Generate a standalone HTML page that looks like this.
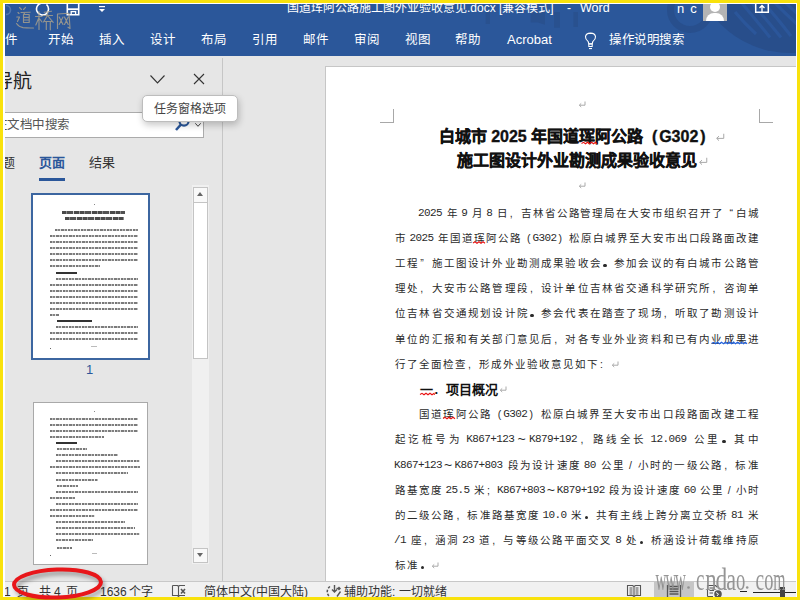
<!DOCTYPE html>
<html lang="zh-CN">
<head>
<meta charset="utf-8">
<style>
*{box-sizing:border-box;margin:0;padding:0}
html,body{width:800px;height:600px;overflow:hidden;background:#F9E20C;font-family:"Liberation Sans",sans-serif}
.a{position:absolute}
.L{position:absolute;left:0;top:0;width:800px;height:600px}
#frame{left:3px;top:3px;width:794px;height:594px;background:#fff}
#topL{clip-path:inset(4px 4px 544px 5px);background:#2B579A}
#mainL{clip-path:inset(56px 4px 19px 5px);background:#E6E6E6}
#statL{clip-path:inset(581px 4px 3px 5px);background:#F1F1F1}
.tab{position:absolute;top:32px;color:#fff;font-size:12.5px;line-height:16px;white-space:nowrap}
.ttl{position:absolute;top:0px;color:#fff;font-size:12px;line-height:16px;white-space:nowrap}
.body{position:absolute;left:394px;width:365px;font-family:"Liberation Serif",serif;font-size:11.5px;color:#222;font-weight:300;white-space:nowrap;line-height:25.2px}
.ln{display:block;height:25.2px;text-align:justify;text-align-last:justify}
.ret{color:#9a9a9a;font-family:"Liberation Sans",sans-serif;font-size:10px}
.bl{position:absolute;height:25.2px;line-height:25.2px;display:flex;justify-content:space-between;white-space:nowrap;font-family:"Liberation Sans",sans-serif;font-size:10.5px;color:#2a2a2a;font-weight:300}
.bl i{font-style:normal;display:block;width:12px;text-align:center}
.bl i.sp{width:3.6px}
.bl i.lt{font-family:"Liberation Mono",monospace;font-size:11px;letter-spacing:-0.6px;font-weight:normal;width:auto}
.bll{justify-content:flex-start}
.hd{font-family:"Liberation Sans",sans-serif;font-weight:bold;font-size:13px;color:#111}
.tb{height:2px;opacity:.8;background:repeating-linear-gradient(90deg,#555 0 2px,#aaa 2px 3px,#666 3px 5px,#ddd 5px 6px,#5a5a5a 6px 9px,#b0b0b0 9px 10px,#606060 10px 12px,#eee 12px 13px)}
.tt{height:2.5px;opacity:.85;background:repeating-linear-gradient(90deg,#2a2a2a 0 4px,#777 4px 5px,#333 5px 11px,#ccc 11px 12px,#2a2a2a 12px 17px,#888 17px 18px)}
.c{display:inline-block;width:1em;text-align:center;text-indent:0;font-style:normal}
.pl{text-align:left;padding-left:.12em}.pr{text-align:right;padding-right:.12em}.pc{text-align:center}
.dt{display:inline-block;width:.3em;height:.3em;background:currentColor;border-radius:50%;vertical-align:baseline;margin-left:.05em}
.rt{display:inline-block;vertical-align:baseline;margin-left:1px}
.st{position:absolute;top:585px;font-size:12px;line-height:14px;color:#333;white-space:nowrap}
</style>
</head>
<body>
<div id="frame" class="a"></div>

<!-- ================= title bar + ribbon tabs ================= -->
<div id="topL" class="L">
  <!-- decorative pattern -->
  <svg class="a" style="left:0;top:0" width="800" height="60" viewBox="0 0 800 60">
    <circle cx="690" cy="10" r="19.5" fill="none" stroke="#284F8D" stroke-width="7"/>
    <clipPath id="bigc"><circle cx="790" cy="-45" r="98"/></clipPath>
    <circle cx="790" cy="-45" r="98" fill="#284E8B"/>
    <g clip-path="url(#bigc)" stroke="#2B569A" stroke-width="3.2" fill="none">
      <path d="M735 12 Q745 24 756 34"/>
      <path d="M741 2 Q756 20 770 37.5"/>
      <path d="M751 2 Q767 20 781 37.5"/>
      <path d="M763 2 Q778 19 791 36"/>
      <path d="M774 2 Q788 16 800 27"/>
      <path d="M785 2 Q793 10 800 16"/>
    </g>
    <g fill="#29518F">
      <rect x="485.7" y="12" width="4.3" height="12"/><path d="M530.7 12H545V24.7L538 22.5H530.7Z"/>
      <rect x="554" y="12" width="6" height="15.7"/><rect x="573.4" y="12" width="4.6" height="15"/>
    </g>
  </svg>
  <!-- quick access -->
  <svg class="a" style="left:0;top:0" width="120" height="20" viewBox="0 0 120 20">
    <path d="M6 5.5 A4.5 4.5 0 0 1 6 14.5" fill="none" stroke="#5276AE" stroke-width="1.6"/>
    <path d="M46.5 4.5 A6 6 0 1 1 41 3.2" fill="none" stroke="#fff" stroke-width="1.6"/>
    <path d="M67.3 2 V14.7 H78.7 V2" fill="none" stroke="#fff" stroke-width="1.6"/>
    <rect x="67.3" y="8.3" width="11.4" height="1.8" fill="#fff"/>
    <path d="M71.2 14.7 V11.6 H75.6 V14.7" fill="none" stroke="#fff" stroke-width="1.3"/>
    <rect x="99" y="6" width="6" height="1.2" fill="#fff"/>
    <path d="M99 9 H105 L102 12 Z" fill="#fff"/>
  </svg>
  <!-- title -->
  <div class="ttl" style="left:287px"><span class="c">国</span><span class="c">道</span><span class="c">珲</span><span class="c">阿</span><span class="c">公</span><span class="c">路</span><span class="c">施</span><span class="c">工</span><span class="c">图</span><span class="c">外</span><span class="c">业</span><span class="c">验</span><span class="c">收</span><span class="c">意</span><span class="c">见</span>.docx [<span class="c">兼</span><span class="c">容</span><span class="c">模</span><span class="c">式</span>]</div>
  <div class="ttl" style="left:567px">-</div>
  <div class="ttl" style="left:580px;font-size:12.5px">Word</div>
  <div class="ttl" style="left:677px;top:1px;font-size:13px;letter-spacing:1.2px">n c</div>
  <div class="a" style="left:703px;top:3px;width:24px;height:18px;background:#B4B4B4;overflow:hidden">
    <div class="a" style="left:7px;top:-1px;width:10px;height:10px;border-radius:50%;background:#fff"></div>
    <div class="a" style="left:3px;top:10px;width:18px;height:12px;border-radius:8px 8px 0 0;background:#fff"></div>
  </div>
  <svg class="a" style="left:754px;top:2px" width="16" height="12" viewBox="0 0 16 12"><path d="M1.7 0 V10.3 H14.3 V0" fill="none" stroke="#fff" stroke-width="1.5"/><path d="M8 10 V3.5 M5.5 6 L8 3.5 L10.5 6" fill="none" stroke="#fff" stroke-width="1.3"/></svg>
  <!-- tabs -->
  <div class="tab" style="left:5px"><span class="c">件</span></div>
  <div class="tab" style="left:48px"><span class="c">开</span><span class="c">始</span></div>
  <div class="tab" style="left:99px"><span class="c">插</span><span class="c">入</span></div>
  <div class="tab" style="left:150px"><span class="c">设</span><span class="c">计</span></div>
  <div class="tab" style="left:201px"><span class="c">布</span><span class="c">局</span></div>
  <div class="tab" style="left:252px"><span class="c">引</span><span class="c">用</span></div>
  <div class="tab" style="left:303px"><span class="c">邮</span><span class="c">件</span></div>
  <div class="tab" style="left:354px"><span class="c">审</span><span class="c">阅</span></div>
  <div class="tab" style="left:405px"><span class="c">视</span><span class="c">图</span></div>
  <div class="tab" style="left:455px"><span class="c">帮</span><span class="c">助</span></div>
  <div class="tab" style="left:507px;font-size:13px">Acrobat</div>
  <svg class="a" style="left:582px;top:30px" width="16" height="20" viewBox="0 0 16 20"><path d="M6.8 13.9 L6.2 11.6 Q3.2 9.2 3.5 6.6 Q4 3.2 8.5 3.1 Q13 3.2 13.5 6.6 Q13.8 9.2 10.8 11.6 L10.2 13.9 Z" fill="none" stroke="#fff" stroke-width="1.1"/><rect x="6.8" y="13.9" width="3.4" height="2.6" fill="none" stroke="#fff" stroke-width="1"/><rect x="7" y="18" width="3" height="1.1" fill="#fff"/></svg>
  <div class="tab" style="left:609px"><span class="c">操</span><span class="c">作</span><span class="c">说</span><span class="c">明</span><span class="c">搜</span><span class="c">索</span></div>
  <!-- watermark -->
  <svg class="a" style="left:0;top:0" width="90" height="40" viewBox="0 0 90 40"><g fill="none" stroke="#A59E8C" stroke-width="1.15" stroke-linecap="round" stroke-linejoin="round" opacity=".85">
    <path d="M19.5 7.5L21.5 9.5M25.5 7.3L23.5 9.5M21 12.5L30 12.2M24.5 13L23.8 14.5M23.5 14.5V22.5M23.5 14.5H29.2V22.5M23.8 17.3H29M23.8 20H29M23.8 22.5H29.2"/>
    <path d="M18 12.5L19 13.5M16.8 17H19.5L17.5 21.5M16.5 23.5Q19 27 23 27.6Q28 28.2 33.5 28"/>
    <path d="M35.5 16.5H42M39 11.5V29.5M39 17.5L35.8 25M39.8 19L42 22M44.3 12.3L51.5 11.2M43.2 15.5H52.5M47.8 11.8L47.5 15.5L43.5 22M47.5 15.5L53.2 22.3M45 21.5H51.5M46.3 21.5V29.5M50.3 21.5V29.8"/>
    <path d="M57.5 14V28.5M57.5 14L69 13.3L70 28.5L68 27.2M59.2 17L63 24.5M63 17L59.2 24.5M64.5 17L68.2 24.5M68.2 17L64.5 24.5"/>
  </g></svg>
</div>

<!-- ================= main gray area ================= -->
<div id="mainL" class="L">
  <!-- nav pane -->
  <div class="a" style="left:-6px;top:69px;font-size:19px;line-height:26px;color:#222;white-space:nowrap"><span class="c">导</span><span class="c">航</span></div>
  <svg class="a" style="left:150px;top:75px" width="15" height="9" viewBox="0 0 15 9"><path d="M0.5 0.5L7.5 8L14.5 0.5" fill="none" stroke="#333" stroke-width="1.1"/></svg>
  <svg class="a" style="left:193px;top:73px" width="12" height="12" viewBox="0 0 12 12"><path d="M1 1L11 11M11 1L1 11" fill="none" stroke="#333" stroke-width="1.1"/></svg>
  <!-- search box -->
  <div class="a" style="left:-2px;top:112px;width:206px;height:26px;background:#fff;border:1px solid #ABABAB"></div>
  <div class="a" style="left:-5.5px;top:116.5px;font-size:12.5px;line-height:16px;color:#555;white-space:nowrap"><span class="c">在</span><span class="c">文</span><span class="c">档</span><span class="c">中</span><span class="c">搜</span><span class="c">索</span></div>
  <svg class="a" style="left:174px;top:114px" width="16" height="18" viewBox="0 0 16 18"><circle cx="10" cy="7" r="4.6" fill="none" stroke="#2B579A" stroke-width="2.2"/><path d="M7 10.5L2 16" stroke="#2B579A" stroke-width="2.6"/></svg>
  <svg class="a" style="left:195px;top:123px" width="6" height="4" viewBox="0 0 6 4"><path d="M0.3 0.3L3 3.3L5.7 0.3" fill="none" stroke="#444" stroke-width="1"/></svg>
  <!-- tabs -->
  <div class="a" style="left:-11px;top:155px;font-size:13px;line-height:16px;color:#333;white-space:nowrap"><span class="c">标</span><span class="c">题</span></div>
  <div class="a" style="left:39px;top:155px;font-size:13px;line-height:16px;color:#2B579A;font-weight:bold;white-space:nowrap"><span class="c">页</span><span class="c">面</span></div>
  <div class="a" style="left:89px;top:155px;font-size:13px;line-height:16px;color:#333;white-space:nowrap"><span class="c">结</span><span class="c">果</span></div>
  <div class="a" style="left:39px;top:178px;width:26px;height:3px;background:#2B579A"></div>
  <!-- thumbnail 1 -->
  <div class="a" style="left:31px;top:193px;width:119px;height:167px;background:#fff;border:2.5px solid #3C66A0"></div>
  <div class="a" style="left:86px;top:363px;font-size:13px;line-height:14px;color:#2B579A">1</div>
  <!-- thumbnail 2 -->
  <div class="a" style="left:33px;top:402px;width:115px;height:163px;background:#fff;border:1px solid #A9A9A9"></div>
  <div class="a tt" style="left:62px;top:211.0px;width:63px"></div>
  <div class="a tt" style="left:65px;top:217.0px;width:59px"></div>
  <div class="a tb" style="left:55px;top:229.2px;width:83px"></div>
  <div class="a tb" style="left:50px;top:234.9px;width:88px"></div>
  <div class="a tb" style="left:50px;top:240.8px;width:88px"></div>
  <div class="a tb" style="left:50px;top:246.7px;width:88px"></div>
  <div class="a tb" style="left:50px;top:252.7px;width:88px"></div>
  <div class="a tb" style="left:50px;top:258.7px;width:88px"></div>
  <div class="a tb" style="left:50px;top:264.7px;width:50px"></div>
  <div class="a" style="left:56px;top:271.7px;width:21px;height:2px;background:#333"></div>
  <div class="a tb" style="left:56px;top:277.8px;width:82px"></div>
  <div class="a tb" style="left:50px;top:283.8px;width:88px"></div>
  <div class="a tb" style="left:50px;top:289.8px;width:88px"></div>
  <div class="a tb" style="left:50px;top:295.7px;width:88px"></div>
  <div class="a tb" style="left:50px;top:301.8px;width:88px"></div>
  <div class="a tb" style="left:50px;top:307.7px;width:88px"></div>
  <div class="a tb" style="left:50px;top:313.6px;width:9px"></div>
  <div class="a" style="left:57px;top:319.8px;width:35px;height:2px;background:#333"></div>
  <div class="a tb" style="left:56px;top:325.6px;width:82px"></div>
  <div class="a tb" style="left:50px;top:331.6px;width:88px"></div>
  <div class="a tb" style="left:50px;top:337.7px;width:88px"></div>
  <div class="a" style="left:91px;top:346.0px;width:6px;height:1px;background:#bbb"></div>
  <div class="a tb" style="left:50px;top:418.0px;width:88px"></div>
  <div class="a tb" style="left:50px;top:424.0px;width:88px"></div>
  <div class="a tb" style="left:50px;top:430.0px;width:88px"></div>
  <div class="a tb" style="left:50px;top:436.0px;width:54px"></div>
  <div class="a" style="left:56px;top:442.0px;width:21px;height:2px;background:#333"></div>
  <div class="a tb" style="left:57px;top:448.0px;width:30px"></div>
  <div class="a tb" style="left:56px;top:454.0px;width:62px"></div>
  <div class="a tb" style="left:56px;top:460.0px;width:84px"></div>
  <div class="a tb" style="left:50px;top:466.0px;width:90px"></div>
  <div class="a tb" style="left:56px;top:472.0px;width:72px"></div>
  <div class="a tb" style="left:56px;top:478.7px;width:42px"></div>
  <div class="a tb" style="left:57px;top:484.8px;width:21px"></div>
  <div class="a tb" style="left:56px;top:491.0px;width:82px"></div>
  <div class="a tb" style="left:50px;top:497.0px;width:25px"></div>
  <div class="a tb" style="left:56px;top:503.0px;width:82px"></div>
  <div class="a tb" style="left:50px;top:509.0px;width:88px"></div>
  <div class="a tb" style="left:50px;top:515.0px;width:45px"></div>
  <div class="a tb" style="left:56px;top:521.0px;width:69px"></div>
  <div class="a tb" style="left:56px;top:527.0px;width:79px"></div>
  <div class="a tb" style="left:56px;top:533.0px;width:84px"></div>
  <div class="a tb" style="left:56px;top:539.0px;width:37px"></div>
  <div class="a tb" style="left:57px;top:546.5px;width:15px"></div>
  <div class="a" style="left:92px;top:553.0px;width:5px;height:1px;background:#bbb"></div>
  <div class="a" style="left:94px;top:204px;width:1px;height:1px;background:#888"></div>
  <div class="a" style="left:94px;top:411px;width:1px;height:1px;background:#888"></div>
  <div class="a" style="left:50px;top:348px;width:1px;height:1px;background:#666"></div>
  <div class="a" style="left:50px;top:555px;width:1px;height:1px;background:#666"></div>
  <!-- scrollbar -->
  <div class="a" style="left:192px;top:185px;width:17px;height:379px;background:#F0F0F0"></div>
  <div class="a" style="left:193px;top:187px;width:15px;height:16px;background:#F9F9F9;border:1px solid #C4C4C4"></div>
  <div class="a" style="left:197px;top:192px;width:0;height:0;border-left:3.7px solid transparent;border-right:3.7px solid transparent;border-bottom:4.5px solid #666"></div>
  <div class="a" style="left:193px;top:202px;width:15px;height:157px;background:#fff;border:1px solid #C4C4C4"></div>
  <div class="a" style="left:193px;top:548px;width:15px;height:15px;background:#F9F9F9;border:1px solid #C4C4C4"></div>
  <div class="a" style="left:197px;top:553px;width:0;height:0;border-left:3.7px solid transparent;border-right:3.7px solid transparent;border-top:4.5px solid #666"></div>
  <!-- separator -->
  <div class="a" style="left:222px;top:58px;width:1px;height:523px;background:#C6C6C6"></div>
  <!-- tooltip -->
  <div class="a" style="left:142px;top:95px;width:96px;height:27px;background:#fff;border:1px solid #BDBDBD;border-radius:5px;box-shadow:1px 3px 7px rgba(0,0,0,.22)"></div>
  <div class="a" style="left:154px;top:101px;font-size:12px;line-height:16px;color:#444;white-space:nowrap"><span class="c">任</span><span class="c">务</span><span class="c">窗</span><span class="c">格</span><span class="c">选</span><span class="c">项</span></div>

  <!-- page -->
  <div class="a" style="left:325px;top:66px;width:480px;height:540px;background:#fff;border-left:1px solid #C6C6C6;border-top:1px solid #C6C6C6"></div>
  <div class="a" style="left:380px;top:122px;width:14px;height:1px;background:#A8A8A8"></div>
  <div class="a" style="left:393px;top:109px;width:1px;height:14px;background:#A8A8A8"></div>
  <div class="a" style="left:759px;top:122px;width:14px;height:1px;background:#A8A8A8"></div>
  <div class="a" style="left:759px;top:109px;width:1px;height:14px;background:#A8A8A8"></div>

  <!-- document text -->
  <div class="ret a" style="left:577px;top:98.5px"><svg class="rt" width="8" height="7" viewBox="0 0 8 7"><path d="M7 0.5V4.2H1.5M3.2 2.4L1.3 4.2L3.2 6" fill="none" stroke="#A0A0A0" stroke-width="0.9"/></svg></div>
  <div class="a" style="left:394px;top:125px;width:365px;text-align:center;font-size:16px;line-height:24px;font-weight:bold;color:#111;white-space:nowrap;-webkit-text-stroke:0.35px #111"><span class="c">白</span><span class="c">城</span><span class="c">市</span> 2025 <span class="c">年</span><span class="c">国</span><span class="c">道</span><span class="c">珲</span><span class="c">阿</span><span class="c">公</span><span class="c">路</span><span class="c pr">(</span>G302<span class="c pl">)</span><span style="position:absolute;-webkit-text-stroke:0"><svg class="rt" width="10" height="9" viewBox="0 0 8 7" style="margin-left:1px"><path d="M7 0.5V4.2H1.5M3.2 2.4L1.3 4.2L3.2 6" fill="none" stroke="#A8A8A8" stroke-width="0.8"/></svg></span></div>
  <div class="a" style="left:394px;top:149px;width:365px;text-align:center;font-size:16px;line-height:24px;font-weight:bold;color:#111;white-space:nowrap;-webkit-text-stroke:0.35px #111"><span class="c">施</span><span class="c">工</span><span class="c">图</span><span class="c">设</span><span class="c">计</span><span class="c">外</span><span class="c">业</span><span class="c">勘</span><span class="c">测</span><span class="c">成</span><span class="c">果</span><span class="c">验</span><span class="c">收</span><span class="c">意</span><span class="c">见</span><span style="position:absolute;-webkit-text-stroke:0"><svg class="rt" width="10" height="9" viewBox="0 0 8 7" style="margin-left:1px"><path d="M7 0.5V4.2H1.5M3.2 2.4L1.3 4.2L3.2 6" fill="none" stroke="#A8A8A8" stroke-width="0.8"/></svg></span></div>
  <div class="ret a" style="left:577px;top:180px"><svg class="rt" width="8" height="7" viewBox="0 0 8 7"><path d="M7 0.5V4.2H1.5M3.2 2.4L1.3 4.2L3.2 6" fill="none" stroke="#A0A0A0" stroke-width="0.9"/></svg></div>
  <div class="bl" style="top:200.5px;left:418px;width:341px"><i class="lt">2025</i><i class="sp"></i><i><span class="c">年</span></i><i class="sp"></i><i class="lt">9</i><i class="sp"></i><i><span class="c">月</span></i><i class="sp"></i><i class="lt">8</i><i class="sp"></i><i><span class="c">日</span></i><i><span class="c pl">,</span></i><i><span class="c">吉</span></i><i><span class="c">林</span></i><i><span class="c">省</span></i><i><span class="c">公</span></i><i><span class="c">路</span></i><i><span class="c">管</span></i><i><span class="c">理</span></i><i><span class="c">局</span></i><i><span class="c">在</span></i><i><span class="c">大</span></i><i><span class="c">安</span></i><i><span class="c">市</span></i><i><span class="c">组</span></i><i><span class="c">织</span></i><i><span class="c">召</span></i><i><span class="c">开</span></i><i><span class="c">了</span></i><i><span class="c pr">“</span></i><i><span class="c">白</span></i><i><span class="c">城</span></i></div>
  <div class="bl" style="top:225.7px;left:394px;width:365px"><i><span class="c">市</span></i><i class="sp"></i><i class="lt">2025</i><i class="sp"></i><i><span class="c">年</span></i><i><span class="c">国</span></i><i><span class="c">道</span></i><i><span class="c">珲</span></i><i><span class="c">阿</span></i><i><span class="c">公</span></i><i><span class="c">路</span></i><i><span class="c pr">(</span></i><i class="lt">G302</i><i><span class="c pl">)</span></i><i><span class="c">松</span></i><i><span class="c">原</span></i><i><span class="c">白</span></i><i><span class="c">城</span></i><i><span class="c">界</span></i><i><span class="c">至</span></i><i><span class="c">大</span></i><i><span class="c">安</span></i><i><span class="c">市</span></i><i><span class="c">出</span></i><i><span class="c">口</span></i><i><span class="c">段</span></i><i><span class="c">路</span></i><i><span class="c">面</span></i><i><span class="c">改</span></i><i><span class="c">建</span></i></div>
  <div class="bl" style="top:250.9px;left:394px;width:365px"><i><span class="c">工</span></i><i><span class="c">程</span></i><i><span class="c pl">”</span></i><i><span class="c">施</span></i><i><span class="c">工</span></i><i><span class="c">图</span></i><i><span class="c">设</span></i><i><span class="c">计</span></i><i><span class="c">外</span></i><i><span class="c">业</span></i><i><span class="c">勘</span></i><i><span class="c">测</span></i><i><span class="c">成</span></i><i><span class="c">果</span></i><i><span class="c">验</span></i><i><span class="c">收</span></i><i><span class="c">会</span></i><i><span class="c pl"><span class="dt"></span></span></i><i><span class="c">参</span></i><i><span class="c">加</span></i><i><span class="c">会</span></i><i><span class="c">议</span></i><i><span class="c">的</span></i><i><span class="c">有</span></i><i><span class="c">白</span></i><i><span class="c">城</span></i><i><span class="c">市</span></i><i><span class="c">公</span></i><i><span class="c">路</span></i><i><span class="c">管</span></i></div>
  <div class="bl" style="top:276.1px;left:394px;width:365px"><i><span class="c">理</span></i><i><span class="c">处</span></i><i><span class="c pl">,</span></i><i><span class="c">大</span></i><i><span class="c">安</span></i><i><span class="c">市</span></i><i><span class="c">公</span></i><i><span class="c">路</span></i><i><span class="c">管</span></i><i><span class="c">理</span></i><i><span class="c">段</span></i><i><span class="c pl">,</span></i><i><span class="c">设</span></i><i><span class="c">计</span></i><i><span class="c">单</span></i><i><span class="c">位</span></i><i><span class="c">吉</span></i><i><span class="c">林</span></i><i><span class="c">省</span></i><i><span class="c">交</span></i><i><span class="c">通</span></i><i><span class="c">科</span></i><i><span class="c">学</span></i><i><span class="c">研</span></i><i><span class="c">究</span></i><i><span class="c">所</span></i><i><span class="c pl">,</span></i><i><span class="c">咨</span></i><i><span class="c">询</span></i><i><span class="c">单</span></i></div>
  <div class="bl" style="top:301.3px;left:394px;width:365px"><i><span class="c">位</span></i><i><span class="c">吉</span></i><i><span class="c">林</span></i><i><span class="c">省</span></i><i><span class="c">交</span></i><i><span class="c">通</span></i><i><span class="c">规</span></i><i><span class="c">划</span></i><i><span class="c">设</span></i><i><span class="c">计</span></i><i><span class="c">院</span></i><i><span class="c pl"><span class="dt"></span></span></i><i><span class="c">参</span></i><i><span class="c">会</span></i><i><span class="c">代</span></i><i><span class="c">表</span></i><i><span class="c">在</span></i><i><span class="c">踏</span></i><i><span class="c">查</span></i><i><span class="c">了</span></i><i><span class="c">现</span></i><i><span class="c">场</span></i><i><span class="c pl">,</span></i><i><span class="c">听</span></i><i><span class="c">取</span></i><i><span class="c">了</span></i><i><span class="c">勘</span></i><i><span class="c">测</span></i><i><span class="c">设</span></i><i><span class="c">计</span></i></div>
  <div class="bl" style="top:326.5px;left:394px;width:365px"><i><span class="c">单</span></i><i><span class="c">位</span></i><i><span class="c">的</span></i><i><span class="c">汇</span></i><i><span class="c">报</span></i><i><span class="c">和</span></i><i><span class="c">有</span></i><i><span class="c">关</span></i><i><span class="c">部</span></i><i><span class="c">门</span></i><i><span class="c">意</span></i><i><span class="c">见</span></i><i><span class="c">后</span></i><i><span class="c pl">,</span></i><i><span class="c">对</span></i><i><span class="c">各</span></i><i><span class="c">专</span></i><i><span class="c">业</span></i><i><span class="c">外</span></i><i><span class="c">业</span></i><i><span class="c">资</span></i><i><span class="c">料</span></i><i><span class="c">和</span></i><i><span class="c">已</span></i><i><span class="c">有</span></i><i><span class="c">内</span></i><i><span class="c">业</span></i><i><span class="c">成</span></i><i><span class="c">果</span></i><i><span class="c">进</span></i></div>
  <div class="bl bll" style="top:351.7px;left:394px"><i><span class="c">行</span></i><i><span class="c">了</span></i><i><span class="c">全</span></i><i><span class="c">面</span></i><i><span class="c">检</span></i><i><span class="c">查</span></i><i><span class="c pl">,</span></i><i><span class="c">形</span></i><i><span class="c">成</span></i><i><span class="c">外</span></i><i><span class="c">业</span></i><i><span class="c">验</span></i><i><span class="c">收</span></i><i><span class="c">意</span></i><i><span class="c">见</span></i><i><span class="c">如</span></i><i><span class="c">下</span></i><i><span class="c pl">:</span></i><span class="ret"><svg class="rt" width="8" height="7" viewBox="0 0 8 7"><path d="M7 0.5V4.2H1.5M3.2 2.4L1.3 4.2L3.2 6" fill="none" stroke="#A0A0A0" stroke-width="0.9"/></svg></span></div>
  <div class="bl bll hd" style="top:376.9px;left:420px"><span class="c">一</span><span class="c pl">.</span><span class="c">项</span><span class="c">目</span><span class="c">概</span><span class="c">况</span><span class="ret"><svg class="rt" width="8" height="7" viewBox="0 0 8 7"><path d="M7 0.5V4.2H1.5M3.2 2.4L1.3 4.2L3.2 6" fill="none" stroke="#A0A0A0" stroke-width="0.9"/></svg></span></div>
  <div class="bl" style="top:402.1px;left:418px;width:341px"><i><span class="c">国</span></i><i><span class="c">道</span></i><i><span class="c">珲</span></i><i><span class="c">阿</span></i><i><span class="c">公</span></i><i><span class="c">路</span></i><i><span class="c pr">(</span></i><i class="lt">G302</i><i><span class="c pl">)</span></i><i><span class="c">松</span></i><i><span class="c">原</span></i><i><span class="c">白</span></i><i><span class="c">城</span></i><i><span class="c">界</span></i><i><span class="c">至</span></i><i><span class="c">大</span></i><i><span class="c">安</span></i><i><span class="c">市</span></i><i><span class="c">出</span></i><i><span class="c">口</span></i><i><span class="c">段</span></i><i><span class="c">路</span></i><i><span class="c">面</span></i><i><span class="c">改</span></i><i><span class="c">建</span></i><i><span class="c">工</span></i><i><span class="c">程</span></i></div>
  <div class="bl" style="top:427.3px;left:394px;width:365px"><i><span class="c">起</span></i><i><span class="c">讫</span></i><i><span class="c">桩</span></i><i><span class="c">号</span></i><i><span class="c">为</span></i><i class="sp"></i><i class="lt">K867+123</i><i><span class="c pc"><span style="font-size:1.35em;line-height:0;vertical-align:-0.05em">~</span></span></i><i class="lt">K879+192</i><i><span class="c pl">,</span></i><i><span class="c">路</span></i><i><span class="c">线</span></i><i><span class="c">全</span></i><i><span class="c">长</span></i><i class="sp"></i><i class="lt">12.069</i><i class="sp"></i><i><span class="c">公</span></i><i><span class="c">里</span></i><i><span class="c pl"><span class="dt"></span></span></i><i><span class="c">其</span></i><i><span class="c">中</span></i></div>
  <div class="bl" style="top:452.5px;left:394px;width:365px"><i class="lt">K867+123</i><i><span class="c pc"><span style="font-size:1.35em;line-height:0;vertical-align:-0.05em">~</span></span></i><i class="lt">K867+803</i><i class="sp"></i><i><span class="c">段</span></i><i><span class="c">为</span></i><i><span class="c">设</span></i><i><span class="c">计</span></i><i><span class="c">速</span></i><i><span class="c">度</span></i><i class="sp"></i><i class="lt">80</i><i class="sp"></i><i><span class="c">公</span></i><i><span class="c">里</span></i><i><span class="c pc">/</span></i><i><span class="c">小</span></i><i><span class="c">时</span></i><i><span class="c">的</span></i><i><span class="c">一</span></i><i><span class="c">级</span></i><i><span class="c">公</span></i><i><span class="c">路</span></i><i><span class="c pl">,</span></i><i><span class="c">标</span></i><i><span class="c">准</span></i></div>
  <div class="bl" style="top:477.7px;left:394px;width:365px"><i><span class="c">路</span></i><i><span class="c">基</span></i><i><span class="c">宽</span></i><i><span class="c">度</span></i><i class="sp"></i><i class="lt">25.5</i><i class="sp"></i><i><span class="c">米</span></i><i><span class="c pl">;</span></i><i class="lt">K867+803</i><i><span class="c pc"><span style="font-size:1.35em;line-height:0;vertical-align:-0.05em">~</span></span></i><i class="lt">K879+192</i><i class="sp"></i><i><span class="c">段</span></i><i><span class="c">为</span></i><i><span class="c">设</span></i><i><span class="c">计</span></i><i><span class="c">速</span></i><i><span class="c">度</span></i><i class="sp"></i><i class="lt">60</i><i class="sp"></i><i><span class="c">公</span></i><i><span class="c">里</span></i><i><span class="c pc">/</span></i><i><span class="c">小</span></i><i><span class="c">时</span></i></div>
  <div class="bl" style="top:502.9px;left:394px;width:365px"><i><span class="c">的</span></i><i><span class="c">二</span></i><i><span class="c">级</span></i><i><span class="c">公</span></i><i><span class="c">路</span></i><i><span class="c pl">,</span></i><i><span class="c">标</span></i><i><span class="c">准</span></i><i><span class="c">路</span></i><i><span class="c">基</span></i><i><span class="c">宽</span></i><i><span class="c">度</span></i><i class="sp"></i><i class="lt">10.0</i><i class="sp"></i><i><span class="c">米</span></i><i><span class="c pl"><span class="dt"></span></span></i><i><span class="c">共</span></i><i><span class="c">有</span></i><i><span class="c">主</span></i><i><span class="c">线</span></i><i><span class="c">上</span></i><i><span class="c">跨</span></i><i><span class="c">分</span></i><i><span class="c">离</span></i><i><span class="c">立</span></i><i><span class="c">交</span></i><i><span class="c">桥</span></i><i class="sp"></i><i class="lt">81</i><i class="sp"></i><i><span class="c">米</span></i></div>
  <div class="bl" style="top:528.1px;left:394px;width:365px"><i class="lt">/1</i><i class="sp"></i><i><span class="c">座</span></i><i><span class="c pl">,</span></i><i><span class="c">涵</span></i><i><span class="c">洞</span></i><i class="sp"></i><i class="lt">23</i><i class="sp"></i><i><span class="c">道</span></i><i><span class="c pl">,</span></i><i><span class="c">与</span></i><i><span class="c">等</span></i><i><span class="c">级</span></i><i><span class="c">公</span></i><i><span class="c">路</span></i><i><span class="c">平</span></i><i><span class="c">面</span></i><i><span class="c">交</span></i><i><span class="c">叉</span></i><i class="sp"></i><i class="lt">8</i><i class="sp"></i><i><span class="c">处</span></i><i><span class="c pl"><span class="dt"></span></span></i><i><span class="c">桥</span></i><i><span class="c">涵</span></i><i><span class="c">设</span></i><i><span class="c">计</span></i><i><span class="c">荷</span></i><i><span class="c">载</span></i><i><span class="c">维</span></i><i><span class="c">持</span></i><i><span class="c">原</span></i></div>
  <div class="bl bll" style="top:553.3px;left:394px"><i><span class="c">标</span></i><i><span class="c">准</span></i><i><span class="c pl"><span class="dt"></span></span></i><span class="ret"><svg class="rt" width="8" height="7" viewBox="0 0 8 7"><path d="M7 0.5V4.2H1.5M3.2 2.4L1.3 4.2L3.2 6" fill="none" stroke="#A0A0A0" stroke-width="0.9"/></svg></span></div>
  <svg class="a" style="left:0;top:0" width="800" height="600"><path d="M581.5 143.5 L583.5 142.3 L585.5 143.8 L587.5 142.3 L589.5 143.8 L591.5 142.3 L593.5 143.8 L595.5 142.3 L597.0 143.8" stroke="#E81010" stroke-width="1.1" fill="none"/><path d="M473.0 243.0 L475.0 241.8 L477.0 243.3 L479.0 241.8 L481.0 243.3 L483.0 241.8 L485.0 243.3" stroke="#E81010" stroke-width="1.1" fill="none"/><path d="M420.0 394.5 L422.0 393.3 L424.0 394.8 L426.0 393.3 L428.0 394.8 L430.0 393.3 L432.0 394.8 L434.0 393.3 L434.5 394.8" stroke="#E81010" stroke-width="1.1" fill="none"/><path d="M443.0 418.5 L445.0 417.3 L447.0 418.8 L449.0 417.3 L451.0 418.8 L453.0 417.3 L455.0 418.8" stroke="#E81010" stroke-width="1.1" fill="none"/><path d="M711.5 343.5 L713.5 342.3 L715.5 343.8 L717.5 342.3 L719.5 343.8 L721.5 342.3 L723.5 343.8 L725.5 342.3 L727.5 343.8 L729.5 342.3 L731.5 343.8 L733.5 342.3 L735.5 343.8 L737.5 342.3 L739.5 343.8 L741.5 342.3 L743.5 343.8 L745.5 342.3 L747.0 343.8" stroke="#2060E0" stroke-width="1.1" fill="none"/></svg>

</div>

<!-- ================= status bar ================= -->
<div id="statL" class="L">
  <div class="a" style="left:5px;top:581px;width:791px;height:1px;background:#C8C8C8"></div>
  <div class="st" style="left:4px">1</div>
  <div class="st" style="left:17px"><span class="c">页</span></div>
  <div class="st" style="left:39px"><span class="c">共</span></div>
  <div class="st" style="left:54px">4</div>
  <div class="st" style="left:66px"><span class="c">页</span></div>
  <div class="st" style="left:100px">1636</div>
  <div class="st" style="left:129px"><span class="c">个</span><span class="c">字</span></div>
  <svg class="a" style="left:171px;top:584px" width="17" height="13" viewBox="0 0 17 13"><path d="M1.5 1.5 H6.5 L7.5 2.5 L8.5 1.5 H14 M1.5 1.5 V11.5 H6.5 L7.5 12.5 L8.5 11.5 H14 M7.5 2.5 V12" fill="none" stroke="#555" stroke-width="1.1"/><path d="M10 5 L14 9.5 M14 5 L10 9.5" stroke="#555" stroke-width="1.6"/></svg>
  <div class="st" style="left:204px"><span class="c">简</span><span class="c">体</span><span class="c">中</span><span class="c">文</span>(<span class="c">中</span><span class="c">国</span><span class="c">大</span><span class="c">陆</span>)</div>
  <svg class="a" style="left:325px;top:584px" width="18" height="14" viewBox="0 0 18 14"><path d="M5 2.5 A6.2 6.2 0 0 0 4 12" fill="none" stroke="#555" stroke-width="1.5" stroke-dasharray="2.5 1.5"/><path d="M9.5 1 V8 M7 5.5 L9.5 8 L12 5.5 M11.5 4.5 H15 M13.5 3 L15 4.5 L13.5 6 M15.5 7.5 L12 12.5" fill="none" stroke="#555" stroke-width="1.4"/></svg>
  <div class="st" style="left:344px"><span class="c">辅</span><span class="c">助</span><span class="c">功</span><span class="c">能</span>: <span class="c">一</span><span class="c">切</span><span class="c">就</span><span class="c">绪</span></div>
  <!-- view buttons -->
  <svg class="a" style="left:626px;top:584px" width="16" height="13" viewBox="0 0 16 13"><path d="M1.5 1.5 H6.5 L8 2.5 L9.5 1.5 H14.5 V11.5 H9.5 L8 12.5 L6.5 11.5 H1.5 Z M8 2.5 V12.5 M3.5 4 H6.5 M3.5 6 H6.5 M3.5 8 H6.5 M3.5 10 H6.5 M9.5 4 H12.5 M9.5 6 H12.5 M9.5 8 H12.5 M9.5 10 H12.5" fill="none" stroke="#555" stroke-width="1.1"/></svg>
  <div class="a" style="left:654px;top:582px;width:40px;height:15px;background:#C6C6C6"></div>
  <svg class="a" style="left:666px;top:584px" width="16" height="13" viewBox="0 0 16 13"><path d="M1.5 1 V13 M14.5 1 V13 M3.5 2.5 H12.5 M3.5 5 H12.5 M3.5 7.5 H12.5 M3.5 10 H12.5" fill="none" stroke="#555" stroke-width="1.3"/></svg>
  <svg class="a" style="left:706px;top:584px" width="17" height="14" viewBox="0 0 17 14"><path d="M1.5 12.5 V1.5 H9.5 L11 3 M3.5 4 H9 M3.5 6.5 H8 M3.5 9 H7 M1.5 12.5 H7" fill="none" stroke="#555" stroke-width="1.1"/><circle cx="12" cy="10" r="3.8" fill="#555"/><path d="M10 8.5 L12.5 10 L11 12" stroke="#F1F1F1" stroke-width="1" fill="none"/></svg>
  <div class="a" style="left:740px;top:591px;width:7px;height:1px;background:#222"></div>
  <div class="a" style="left:753px;top:592px;width:43px;height:1px;background:#222"></div>
  <div class="a" style="left:780px;top:587px;width:5px;height:10px;background:#444"></div>
</div>

<!-- ================= overlays ================= -->
<svg class="a" style="left:0;top:0;opacity:.93" width="800" height="600" viewBox="0 0 800 600"><g fill="#8E8E8E" font-family="Liberation Serif" font-size="31"><text x="655.6" y="589.5" textLength="10.8" lengthAdjust="spacingAndGlyphs">w</text><text x="665.4" y="589.5" textLength="10.7" lengthAdjust="spacingAndGlyphs">w</text><text x="675.1" y="589.5" textLength="10.8" lengthAdjust="spacingAndGlyphs">w</text><circle cx="688.5" cy="587.5" r="1.3"/><text x="696.1" y="589.5" textLength="8.4" lengthAdjust="spacingAndGlyphs">c</text><text x="705.2" y="589.5" textLength="11.3" lengthAdjust="spacingAndGlyphs">n</text><text x="715.5" y="589.5" textLength="11.7" lengthAdjust="spacingAndGlyphs">d</text><text x="726.2" y="589.5" textLength="9.8" lengthAdjust="spacingAndGlyphs">a</text><text x="735.9" y="589.5" textLength="9.3" lengthAdjust="spacingAndGlyphs">o</text><circle cx="747.2" cy="587.5" r="1.3"/><text x="755.5" y="589.5" textLength="8.6" lengthAdjust="spacingAndGlyphs">c</text><text x="764.3" y="589.5" textLength="9.2" lengthAdjust="spacingAndGlyphs">o</text><text x="773.3" y="589.5" textLength="12.2" lengthAdjust="spacingAndGlyphs">m</text></g></svg>
<div class="L">
  <svg class="a" style="left:0;top:555px" width="130" height="50" viewBox="0 555 130 50">
    <defs><filter id="sh" x="-20%" y="-50%" width="140%" height="200%"><feGaussianBlur stdDeviation="2"/></filter></defs>
    <ellipse cx="60" cy="587" rx="43" ry="14" transform="rotate(-2 60 587)" fill="none" stroke="rgba(0,0,0,.35)" stroke-width="4" filter="url(#sh)"/>
    <ellipse cx="57.5" cy="583.5" rx="43.5" ry="14" transform="rotate(-2 57.5 583.5)" fill="none" stroke="#E8161A" stroke-width="4"/>
  </svg>
</div>
</body>
</html>
